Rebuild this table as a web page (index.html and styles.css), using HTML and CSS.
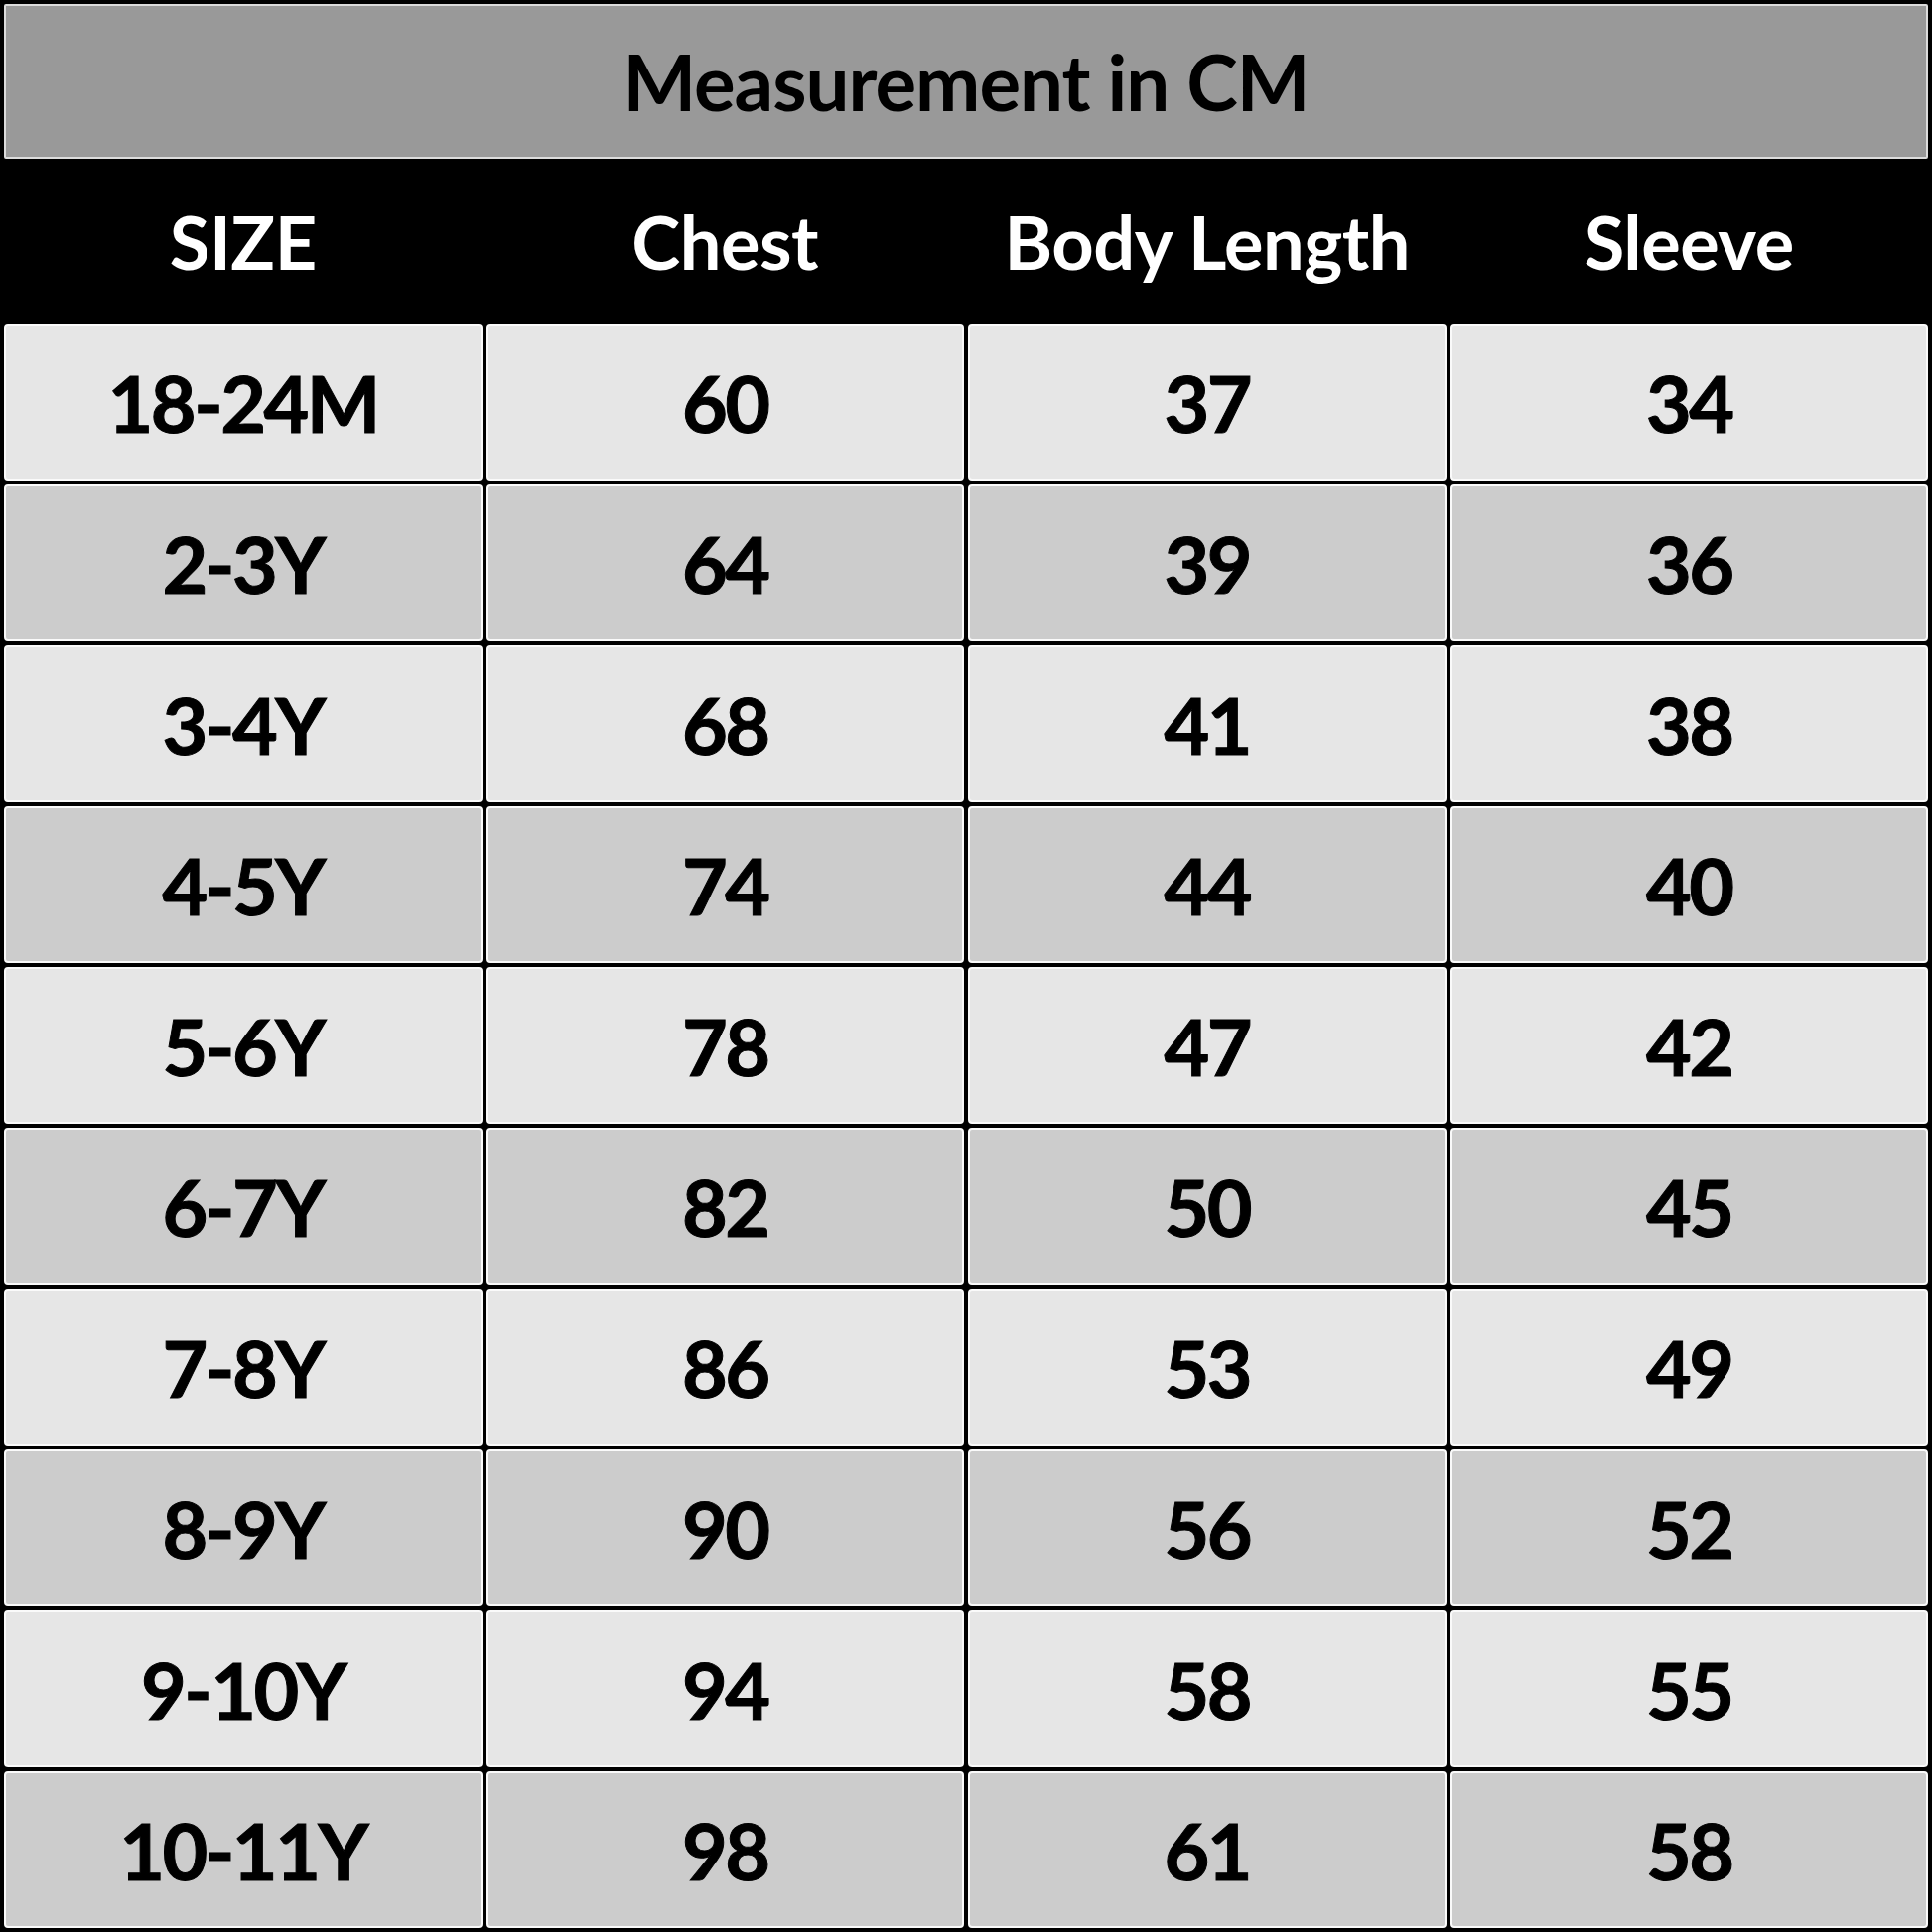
FILE: index.html
```html
<!DOCTYPE html>
<html>
<head>
<meta charset="utf-8">
<link rel="stylesheet" href="styles.css">
</head>
<body>
<div class="chart">
  <div class="title">Measurement in CM</div>
  <div class="head">
    <div>SIZE</div><div>Chest</div><div>Body Length</div><div>Sleeve</div>
  </div>
  <div class="body">
    <div class="c light">18-24M</div><div class="c light">60</div><div class="c light">37</div><div class="c light">34</div>
    <div class="c dark">2-3Y</div><div class="c dark">64</div><div class="c dark">39</div><div class="c dark">36</div>
    <div class="c light">3-4Y</div><div class="c light">68</div><div class="c light">41</div><div class="c light">38</div>
    <div class="c dark">4-5Y</div><div class="c dark">74</div><div class="c dark">44</div><div class="c dark">40</div>
    <div class="c light">5-6Y</div><div class="c light">78</div><div class="c light">47</div><div class="c light">42</div>
    <div class="c dark">6-7Y</div><div class="c dark">82</div><div class="c dark">50</div><div class="c dark">45</div>
    <div class="c light">7-8Y</div><div class="c light">86</div><div class="c light">53</div><div class="c light">49</div>
    <div class="c dark">8-9Y</div><div class="c dark">90</div><div class="c dark">56</div><div class="c dark">52</div>
    <div class="c light">9-10Y</div><div class="c light">94</div><div class="c light">58</div><div class="c light">55</div>
    <div class="c dark">10-11Y</div><div class="c dark">98</div><div class="c dark">61</div><div class="c dark">58</div>
  </div>
</div>
</body>
</html>
```
FILE: styles.css
```css
html, body {
  margin: 0;
  padding: 0;
  background: #000;
}
.chart {
  width: 1946px;
  height: 1946px;
  box-sizing: border-box;
  padding: 4px;
  background: #000;
  display: flex;
  flex-direction: column;
  font-family: Lato, "Open Sans", sans-serif;
  font-weight: 700;
}
.title {
  height: 156px;
  box-sizing: border-box;
  background: #999999;
  border: 2px solid #dcdcdc;
  border-radius: 2px;
  display: flex;
  align-items: center;
  justify-content: center;
  font-size: 78px;
  color: #000;
  letter-spacing: -1px;
}
.head {
  height: 166px;
  display: grid;
  grid-template-columns: repeat(4, 1fr);
  column-gap: 4px;
  color: #fff;
  font-size: 74px;
  letter-spacing: -0.5px;
}
.head div {
  display: flex;
  align-items: center;
  justify-content: center;
}
.body {
  flex: 1;
  display: grid;
  grid-template-columns: repeat(4, 1fr);
  grid-template-rows: repeat(10, 1fr);
  gap: 4px;
}
.c {
  box-sizing: border-box;
  border: 2px solid #fafafa;
  border-radius: 4px;
  display: flex;
  align-items: center;
  justify-content: center;
  font-size: 79px;
  color: #000;
  letter-spacing: -2.5px;
  -webkit-text-stroke: 1px #000;
}
.light { background: #e6e6e6; }
.dark { background: #cccccc; }
```
